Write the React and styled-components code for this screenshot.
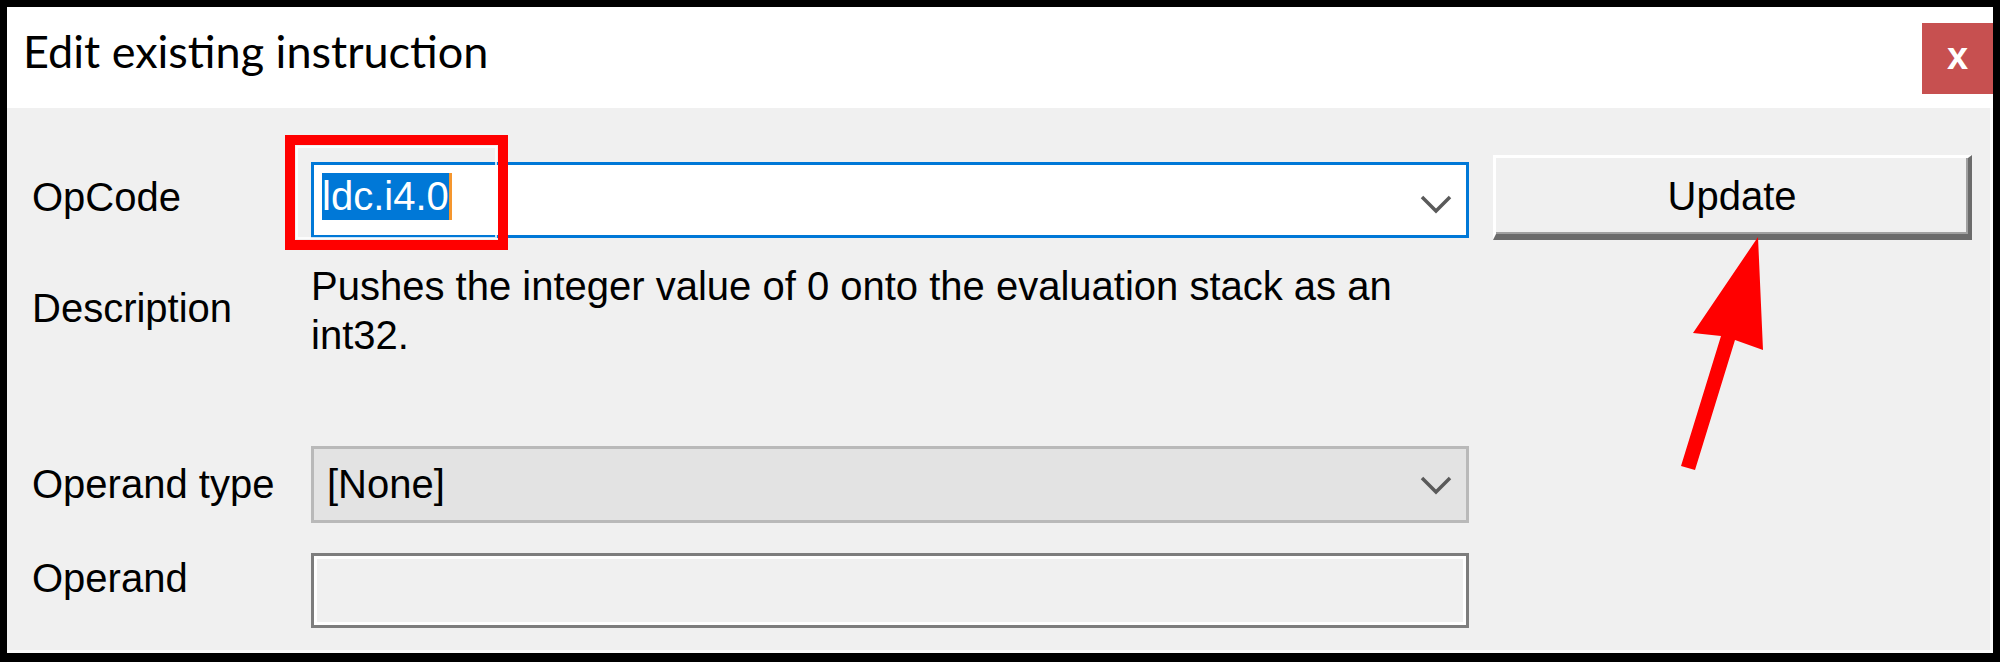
import React from 'react';
import styled, { createGlobalStyle } from 'styled-components';

const GlobalStyle = createGlobalStyle`
  html, body {
    margin: 0;
    padding: 0;
    background: #000;
  }
  body {
    font-family: 'Liberation Sans', Arial, sans-serif;
  }
`;

const Window = styled.div`
  position: relative;
  width: 2000px;
  height: 662px;
  box-sizing: border-box;
  border: 7px solid #000;
  border-bottom-width: 9px;
  display: flex;
  flex-direction: column;
  background: #fff;
`;

const TitleBar = styled.div`
  height: 101px;
  flex: none;
  display: flex;
  justify-content: space-between;
  align-items: flex-start;
  background: #fff;
`;

const Title = styled.div`
  padding: 22px 0 0 16px;
  font-family: 'Segoe UI', Lato, 'Liberation Sans', sans-serif;
  font-size: 45px;
  line-height: 45px;
  color: #000;
`;

const CloseButton = styled.button`
  margin-top: 16px;
  width: 71px;
  height: 71px;
  padding: 0 0 6px;
  border: none;
  background: #c75050;
  color: #fff;
  font-family: 'Liberation Sans', Arial, sans-serif;
  font-weight: bold;
  font-size: 38px;
  line-height: 1;
  display: flex;
  align-items: center;
  justify-content: center;
`;

const Body = styled.div`
  flex: 1;
  box-sizing: border-box;
  background: #f0f0f0;
  border-right: 3px solid #fbfbfb;
  border-bottom: 3px solid #fbfbfb;
  padding: 47px 0 0 25px;
  color: #000;
  font-size: 40px;
`;

const Row = styled.div`
  display: grid;
  grid-template-columns: 279px 1158px 503px;
  height: ${(p) => p.$h}px;
  margin-top: ${(p) => p.$mt || 0}px;
`;

const Label = styled.div`
  align-self: start;
  margin-top: ${(p) => p.$mt}px;
  line-height: 47px;
  white-space: nowrap;
`;

const Combo = styled.div`
  box-sizing: border-box;
  margin-top: ${(p) => p.$mt || 0}px;
  height: ${(p) => p.$h}px;
  border: 3px solid ${(p) => (p.$focused ? '#0078d7' : '#b9b9b9')};
  background: ${(p) => (p.$focused ? '#fff' : '#e3e3e3')};
  display: flex;
  align-items: ${(p) => (p.$focused ? 'flex-start' : 'center')};
  justify-content: space-between;
  padding: ${(p) => (p.$focused ? '8px 14px 0 8px' : '0 14px 0 13px')};
`;

const Selected = styled.span`
  display: inline-block;
  height: 47px;
  line-height: 47px;
  background: #0078d7;
  color: #fff;
  border-right: 3px solid #f5962e;
`;

const Plain = styled.span`
  line-height: 47px;
`;

const Chevron = styled.svg`
  align-self: center;
  flex: none;
`;

const TextBox = styled.div`
  box-sizing: border-box;
  height: 75px;
  border: 3px solid #7d7d7d;
  box-shadow: inset 0 0 0 3px #fff;
  background: #f0f0f0;
`;

const UpdateButton = styled.button`
  justify-self: end;
  width: 479px;
  height: 85px;
  box-sizing: border-box;
  background: #f0f0f0;
  border-style: solid;
  border-width: 3px 4px 6px 3px;
  border-color: #fff #6b6b6b #6b6b6b #fff;
  box-shadow: inset -2px -2px 0 #a0a0a0;
  font-family: 'Liberation Sans', Arial, sans-serif;
  font-size: 40px;
  color: #000;
  padding: 0;
`;

const Description = styled.div`
  margin-top: 22px;
  line-height: 49px;
  align-self: start;
`;

const Overlay = styled.svg`
  position: absolute;
  top: -7px;
  left: -7px;
  width: 2000px;
  height: 662px;
  pointer-events: none;
`;

const ChevronIcon = () => (
  <Chevron width="32" height="20" viewBox="0 0 32 20">
    <path d="M2 3 L16 17 L30 3" fill="none" stroke="#5a5a5a" strokeWidth="3.5" />
  </Chevron>
);

export default function App() {
  return (
    <>
      <GlobalStyle />
      <Window>
        <TitleBar>
          <Title>Edit existing instruction</Title>
          <CloseButton>x</CloseButton>
        </TitleBar>
        <Body>
          <Row $h={85}>
            <Label $mt={19}>OpCode</Label>
            <Combo $focused $mt={7} $h={76}>
              <Selected>ldc.i4.0</Selected>
              <ChevronIcon />
            </Combo>
            <UpdateButton>Update</UpdateButton>
          </Row>
          <Row $h={206}>
            <Label $mt={45}>Description</Label>
            <Description>
              Pushes the integer value of 0 onto the evaluation stack as an int32.
            </Description>
          </Row>
          <Row $h={77}>
            <Label $mt={15}>Operand type</Label>
            <Combo $h={77}>
              <Plain>[None]</Plain>
              <ChevronIcon />
            </Combo>
          </Row>
          <Row $h={75} $mt={30}>
            <Label $mt={2}>Operand</Label>
            <TextBox />
          </Row>
        </Body>
        <Overlay viewBox="0 0 2000 662">
          <rect x="290" y="140" width="213" height="105" fill="none" stroke="#ff0000" strokeWidth="10" />
          <rect x="297" y="147" width="199" height="91" fill="none" stroke="#ffffff" strokeOpacity="0.8" strokeWidth="2" />
          <polygon
            points="1681,466 1721,336 1693,333 1758,237 1763,350 1735,340 1695,470"
            fill="#ff0000"
          />
        </Overlay>
      </Window>
    </>
  );
}
